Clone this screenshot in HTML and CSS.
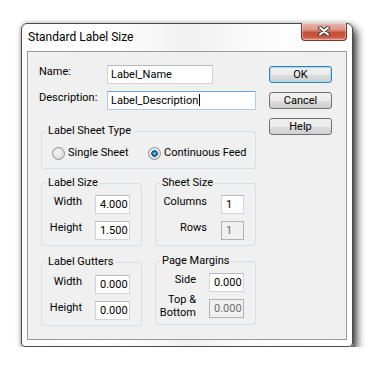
FILE: index.html
```html
<!DOCTYPE html>
<html lang="en">
<head>
  <meta charset="UTF-8">
  <title>Standard Label Size</title>
  <link rel="stylesheet" href="styles.css">
</head>
<body>
  <div class="window">
    <div class="titlebar">
      <span class="title">Standard Label Size</span>
      <button class="close" aria-label="Close">
        <svg width="14" height="10" viewBox="0 0 14 10">
          <path d="M3 1.5 L11 8.5 M11 1.5 L3 8.5" stroke="#3b3b3b" stroke-width="4" stroke-linecap="round"/>
          <path d="M3 1.5 L11 8.5 M11 1.5 L3 8.5" stroke="#fff" stroke-width="2" stroke-linecap="round"/>
        </svg>
      </button>
    </div>

    <div class="client">
      <div class="main">
        <div class="field-row">
          <span class="field-label">Name:</span>
          <div class="textbox name">Label_Name</div>
        </div>
        <div class="field-row">
          <span class="field-label">Description:</span>
          <div class="textbox description focused">Label_Description<span class="caret"></span></div>
        </div>

        <fieldset class="group sheet-type">
          <legend>Label Sheet Type</legend>
          <div class="radios">
            <span class="radio"><span class="radio-dot"></span>Single Sheet</span>
            <span class="radio"><span class="radio-dot checked"></span>Continuous Feed</span>
          </div>
        </fieldset>

        <div class="group-row">
          <fieldset class="group">
            <legend>Label Size</legend>
            <div class="fields">
              <span class="label">Width</span>
              <div class="textbox num">4.000</div>
              <span class="label">Height</span>
              <div class="textbox num">1.500</div>
            </div>
          </fieldset>
          <fieldset class="group">
            <legend>Sheet Size</legend>
            <div class="fields narrow">
              <span class="label">Columns</span>
              <div class="textbox num">1</div>
              <span class="label">Rows</span>
              <div class="textbox num disabled">1</div>
            </div>
          </fieldset>
        </div>

        <div class="group-row second">
          <fieldset class="group gutters">
            <legend>Label Gutters</legend>
            <div class="fields">
              <span class="label">Width</span>
              <div class="textbox num">0.000</div>
              <span class="label">Height</span>
              <div class="textbox num">0.000</div>
            </div>
          </fieldset>
          <fieldset class="group">
            <legend>Page Margins</legend>
            <div class="fields">
              <span class="label">Side</span>
              <div class="textbox num">0.000</div>
              <span class="label two-line">Top &amp;<br>Bottom</span>
              <div class="textbox num disabled">0.000</div>
            </div>
          </fieldset>
        </div>
      </div>

      <div class="buttons">
        <button class="btn default">OK</button>
        <button class="btn">Cancel</button>
        <button class="btn">Help</button>
      </div>
    </div>
  </div>
</body>
</html>
```

FILE: styles.css
```css
body {
  margin: 0;
  background: #fff;
  font-family: Roboto, "Liberation Sans", sans-serif;
  font-size: 11px;
  color: #000;
}

.window {
  display: flex;
  flex-direction: column;
  box-sizing: border-box;
  width: 332px;
  height: 324px;
  margin: 23px 0 0 21px;
  padding: 0 5px 6px;
  border: 1px solid #4a4a4a;
  border-radius: 6px 6px 4px 4px;
  background: linear-gradient(to right, #fbfbfb 0%, #ffffff 25%, #f1f1f1 50%, #fcfcfc 75%, #ffffff 100%);
  box-shadow: 4px 5px 8px rgba(0, 0, 0, 0.75), 0 0 4px rgba(0, 0, 0, 0.25);
}

.titlebar {
  display: flex;
  justify-content: space-between;
  align-items: flex-start;
  height: 27px;
}

.title {
  font-size: 12px;
  line-height: 16px;
  padding: 5px 0 0 1px;
}

.close {
  display: flex;
  align-items: center;
  justify-content: center;
  width: 46px;
  height: 18px;
  margin-top: -1px;
  padding: 0 0 1px;
  border: 1px solid #7a3328;
  border-top: none;
  border-radius: 0 0 4px 4px;
  background: linear-gradient(to bottom, #ecb7ad 0%, #dc9386 40%, #c5503c 55%, #c9563f 80%, #dc8b75 100%);
  box-shadow: inset 0 0 0 1px rgba(255, 255, 255, 0.35);
}

.client {
  display: flex;
  box-sizing: border-box;
  height: 289px;
  padding: 13px 0 0 11px;
  border: 1px solid #9a9a9a;
  background: #f0f0f0;
}

.main {
  width: 217px;
}

.field-row {
  display: flex;
  align-items: flex-start;
}

.field-row + .field-row {
  margin-top: 7px;
}

.field-label {
  width: 68px;
  line-height: 14px;
}

.textbox {
  box-sizing: border-box;
  height: 19px;
  padding: 0 3px;
  border: 1px solid #d0d4d9;
  border-top-color: #b5b8bd;
  background: #fff;
  line-height: 17px;
  white-space: nowrap;
  overflow: hidden;
}

.name {
  width: 106px;
}

.description {
  width: 149px;
}

.focused {
  border-color: #a9cdef;
  border-top-color: #6ea5d9;
}

.caret {
  display: inline-block;
  width: 1px;
  height: 12px;
  margin-left: 1px;
  background: #000;
  vertical-align: -2px;
}

.group {
  box-sizing: border-box;
  min-width: 0;
  margin: 0;
  padding: 0;
  border: 1px solid #d5dfe5;
  border-radius: 3px;
}

.group legend {
  margin-left: 4px;
  padding: 0 2px;
  line-height: 14px;
}

.sheet-type {
  width: 215px;
  margin: 14px 0 0 2px;
}

.radios {
  display: flex;
  padding: 8px 0 8px 10px;
}

.radio {
  display: flex;
  align-items: center;
  gap: 3px;
  line-height: 14px;
}

.radio:first-child {
  width: 96px;
}

.radio-dot {
  box-sizing: border-box;
  width: 13px;
  height: 13px;
  border: 1px solid #8e8f8f;
  border-radius: 50%;
  background: radial-gradient(circle at 40% 35%, #f6f6f6 0%, #e0e0e0 60%, #cbcbcb 100%);
}

.radio-dot.checked {
  background:
    radial-gradient(circle 3.5px at 50% 50%, #8fd6f7 0%, #2a80bd 50%, #0f3d6b 85%, transparent 100%),
    radial-gradient(circle at 40% 35%, #f6f6f6 0%, #e0e0e0 60%, #cbcbcb 100%);
}

.group-row {
  display: flex;
  align-items: flex-start;
  gap: 13px;
  margin: 7px 0 0 2px;
}

.group-row.second {
  margin-top: 8px;
}

.group-row .group {
  width: 101px;
}

.fields {
  display: grid;
  grid-template-columns: 1fr 35px;
  column-gap: 13px;
  row-gap: 7px;
  align-items: start;
  padding: 5px 11px 5px 0;
}

.fields.narrow {
  grid-template-columns: 1fr 23px;
  column-gap: 14px;
}

.gutters {
  margin-top: 1px;
}

.gutters .fields {
  padding-top: 6px;
}

.label {
  text-align: right;
  line-height: 14px;
}

.two-line {
  line-height: 13px;
  margin-top: -6px;
}

.num {
  padding: 0 3px 0 4px;
}

.disabled {
  border-color: #adb2b5;
  background: #f0f0f0;
  color: #6d6d6d;
}

.buttons {
  display: flex;
  flex-direction: column;
  gap: 9px;
  margin-left: 13px;
  padding-top: 1px;
}

.btn {
  box-sizing: border-box;
  width: 63px;
  height: 17px;
  padding: 0;
  border: 1px solid #707070;
  border-radius: 3px;
  background: linear-gradient(to bottom, #f2f2f2 0%, #ebebeb 50%, #dddddd 51%, #cfcfcf 100%);
  font-family: Roboto, "Liberation Sans", sans-serif;
  font-size: 11px;
  line-height: 15px;
  color: #000;
}

.btn.default {
  border-color: #3c7fb1;
  box-shadow: inset 0 0 0 1px #9fdcf6;
}
```
